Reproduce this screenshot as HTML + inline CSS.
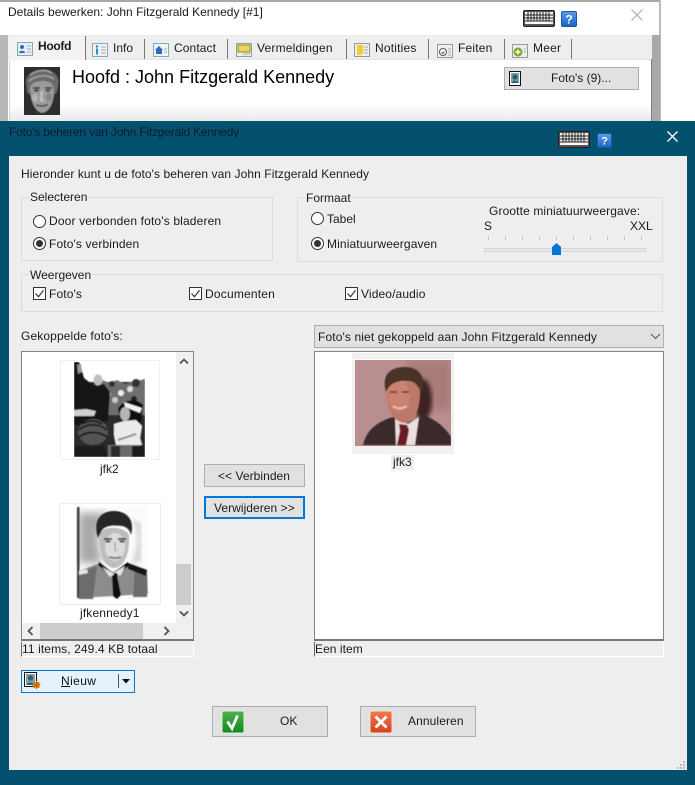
<!DOCTYPE html>
<html><head><meta charset="utf-8"><style>
html,body{margin:0;padding:0}
body{width:695px;height:785px;position:relative;overflow:hidden;background:#fff;font:12px "Liberation Sans",sans-serif;color:#1a1a1a}
.a{position:absolute}
.t{position:absolute;white-space:nowrap;line-height:14px;height:14px}
.b{position:absolute;box-sizing:border-box;background:#e1e1e1;border:1px solid #adadad}
.g{position:absolute;box-sizing:border-box;border:1px solid #dcdcdc}
.r{position:absolute;box-sizing:border-box;width:13px;height:13px;border:1px solid #333;border-radius:50%;background:#fff}
.r.on:after{content:"";position:absolute;left:2px;top:2px;width:7px;height:7px;border-radius:50%;background:#333}
.c{position:absolute;width:13px;height:13px}
.sep{position:absolute;top:39px;width:1px;height:20px;background:#777}
svg{position:absolute;display:block}
.lab{position:absolute;background:#eee;padding:0 1px;line-height:14px;height:14px;white-space:nowrap}
</style></head><body>

<svg width="0" height="0" style="position:absolute"><defs>
<filter id="b05"><feGaussianBlur stdDeviation="0.5"/></filter>
<filter id="b1"><feGaussianBlur stdDeviation="0.9"/></filter>
<filter id="b2"><feGaussianBlur stdDeviation="2"/></filter>
<filter id="b4"><feGaussianBlur stdDeviation="4"/></filter>
<linearGradient id="hg" x1="0" y1="0" x2="0" y2="1"><stop offset="0" stop-color="#5b9de8"/><stop offset="1" stop-color="#1b62c4"/></linearGradient>
<linearGradient id="okg" x1="0" y1="0" x2="0" y2="1"><stop offset="0" stop-color="#54b04c"/><stop offset="1" stop-color="#0f8a1c"/></linearGradient>
<linearGradient id="xg" x1="0" y1="0" x2="0" y2="1"><stop offset="0" stop-color="#ef7a4a"/><stop offset="1" stop-color="#d2401f"/></linearGradient>
<symbol id="kb" viewBox="0 0 32 17"><rect x=".5" y=".5" width="31" height="16" rx="1.5" fill="#555" stroke="#222"/><rect x="2" y="2" width="28" height="12" fill="#f4f4f4"/><path d="M2 5h28M2 8h28M2 11h28M5 2v9M8 2v9M11 2v9M14 2v9M17 2v9M20 2v9M23 2v9M26 2v9" stroke="#222" stroke-width="1"/><rect x="8" y="11.5" width="15" height="2.5" fill="#fff"/></symbol>
<symbol id="hp" viewBox="0 0 16 16"><rect x=".5" y=".5" width="15" height="15" rx="1.5" fill="url(#hg)" stroke="#1b55a8"/><text x="8" y="12.5" font-family="Liberation Sans" font-weight="700" font-size="12" text-anchor="middle" fill="#fff">?</text></symbol>
<symbol id="cb" viewBox="0 0 13 13"><rect x=".5" y=".5" width="12" height="12" fill="#fff" stroke="#333"/><path d="M2.5 6.5l3 3.2 5-6.5" fill="none" stroke="#333" stroke-width="1.2"/></symbol>
</defs></svg>

<!-- back window -->
<div class="a" style="left:0;top:0;width:660px;height:2px;background:#a9a9a3"></div>
<div class="a" style="left:0;top:2px;width:659px;height:34px;background:#fff"></div>
<div class="a" style="left:659px;top:0;width:2px;height:121px;background:#bcbcbc"></div>
<div class="a" style="left:0;top:35px;width:8px;height:86px;background:#b7b7b7"></div>
<div class="a" style="left:652px;top:35px;width:8px;height:86px;background:#a8a8a8"></div>
<div class="a" style="left:8px;top:35px;width:644px;height:24px;background:#eeeeee"></div>
<div class="a" style="left:9px;top:59px;width:642px;height:62px;background:linear-gradient(#fff 0,#fff 44px,#e8e8e8 62px);border-top:1px solid #e6e6e6;box-sizing:border-box"></div>
<div class="a" style="left:9px;top:59px;width:1px;height:62px;background:#d8d8d8"></div>
<div class="a" style="left:651px;top:59px;width:1px;height:62px;background:#808080"></div>

<div class="t" style="left:8px;top:5px">Details bewerken: John Fitzgerald Kennedy [#1]</div>
<svg style="left:523px;top:10px" width="32" height="17"><use href="#kb"/></svg>
<svg style="left:561px;top:11px" width="16" height="16"><use href="#hp"/></svg>
<svg style="left:631px;top:9px" width="12" height="12"><path d="M.5 .5l11 11M11.5 .5l-11 11" stroke="#a8a8a8" stroke-width="1.1"/></svg>

<!-- tabs -->
<div class="a" style="left:9px;top:37px;width:76px;height:23px;background:#f3f3f3"></div>
<div class="sep" style="left:85px;top:36px;height:24px"></div><div class="sep" style="left:144px"></div><div class="sep" style="left:227px"></div><div class="sep" style="left:346px"></div><div class="sep" style="left:428px"></div><div class="sep" style="left:504px"></div><div class="sep" style="left:571px"></div>
<svg style="left:17px;top:42px" width="16" height="14"><rect x=".5" y=".5" width="15" height="13" fill="#e8eef8" stroke="#8aa"/><circle cx="5" cy="5" r="2" fill="#2a6cc0"/><path d="M2 11c0-3 6-3 6 0z" fill="#2a6cc0"/><path d="M10 4h4M10 7h4M10 10h4" stroke="#aab"/></svg>
<div class="t" style="left:38px;top:39px;font-weight:700;letter-spacing:-.3px">Hoofd</div>
<svg style="left:92px;top:43px" width="16" height="14"><rect x=".5" y=".5" width="15" height="13" fill="#eef3fa" stroke="#8aa"/><circle cx="5" cy="3.5" r="1.2" fill="#2a8cc0"/><path d="M5 5.5v6" stroke="#2a8cc0" stroke-width="2"/><path d="M9 4h5M9 7h5M9 10h5" stroke="#aab"/></svg>
<div class="t" style="left:113px;top:41px">Info</div>
<svg style="left:153px;top:43px" width="16" height="14"><rect x=".5" y=".5" width="15" height="13" fill="#eef3fa" stroke="#8aa"/><path d="M2 7l4-4 4 4H9v4H3V7z" fill="#2a6cc0"/><path d="M11 6h3M11 9h3" stroke="#aab"/></svg>
<div class="t" style="left:174px;top:41px;letter-spacing:.1px">Contact</div>
<svg style="left:236px;top:43px" width="16" height="14"><rect x=".5" y=".5" width="15" height="13" fill="#eee" stroke="#8a8"/><rect x="2" y="2" width="12" height="7" fill="#e8d860" stroke="#a08020"/><path d="M7 11h7" stroke="#aaa"/></svg>
<div class="t" style="left:257px;top:41px;letter-spacing:.2px">Vermeldingen</div>
<svg style="left:354px;top:43px" width="16" height="14"><rect x=".5" y=".5" width="15" height="13" fill="#eee" stroke="#999"/><path d="M3 2h6v8l-2 2H3z" fill="#f0d030"/><path d="M10 4h4M10 7h4M10 10h4" stroke="#aaa"/></svg>
<div class="t" style="left:375px;top:41px;letter-spacing:.2px">Notities</div>
<svg style="left:437px;top:44px" width="16" height="14"><rect x=".5" y=".5" width="15" height="13" fill="#eee" stroke="#999"/><circle cx="6" cy="8" r="3.5" fill="#fff" stroke="#555"/><path d="M4.5 8l1.5 1.5L7.5 7.5" stroke="#555" fill="none"/><path d="M11 5h3M11 8h3M11 11h3" stroke="#aaa"/></svg>
<div class="t" style="left:458px;top:41px;letter-spacing:.2px">Feiten</div>
<svg style="left:512px;top:44px" width="16" height="14"><rect x=".5" y=".5" width="15" height="13" fill="#eee" stroke="#999"/><circle cx="6" cy="8" r="4.5" fill="#7aaa28"/><path d="M3.5 8h5M6 5.5v5" stroke="#fff" stroke-width="1.4"/><path d="M12 5h2M12 8h2" stroke="#aaa"/></svg>
<div class="t" style="left:533px;top:41px;letter-spacing:.2px">Meer</div>

<!-- head -->
<svg style="left:24px;top:67px" width="36" height="48" viewBox="0 0 36 48"><rect width="36" height="48" fill="#2e2e2e"/><g filter="url(#b05)">
<path d="M2 14C3 2 26-2 33 9c3 6 1 12-1 18l-2 0C29 18 27 14 21 14c-6 1-12 1-14 5l-1 8-3-1z" fill="#6a6a6a"/>
<path d="M6 8c6-5 16-6 22-2M5 14c7-6 18-7 25-2" stroke="#a5a5a5" stroke-width="1.500" fill="none"/>
<path d="M6 22C6 16 12 14 20 14c7 0 10 4 10 11 0 10-4 20-12 21C11 45 6 34 6 22z" fill="#9c9c9c"/>
<path d="M9 21h7M21 21h7" stroke="#3a3a3a" stroke-width="1.800"/><ellipse cx="12.500" cy="23.500" rx="2.500" ry="1" fill="#2a2a2a"/><ellipse cx="24" cy="23.500" rx="2.500" ry="1" fill="#2a2a2a"/>
<path d="M18 24l-1 9 3 1" stroke="#c9c9c9" stroke-width="2" fill="none"/><path d="M12 38c4 1.500 8 1.500 12-.5" stroke="#3a3a3a" stroke-width="1.300" fill="none"/>
<ellipse cx="11" cy="31" rx="3" ry="4" fill="#b4b4b4"/><ellipse cx="25" cy="30" rx="3" ry="4" fill="#858585"/></g></svg>
<div class="t" style="left:72px;top:67px;font-size:18px;line-height:21px;height:21px;color:#000">Hoofd : John Fitzgerald Kennedy</div>
<div class="b" style="left:504px;top:67px;width:135px;height:23px"></div>
<svg style="left:509px;top:71px" width="12" height="15"><rect x=".5" y=".5" width="11" height="14" fill="#fff" stroke="#111"/><rect x="2" y="2" width="8" height="10" fill="#7f9fa8"/><circle cx="6" cy="6" r="2.6" fill="#2c5c70"/><path d="M3 12c0-3 6-3 6 0z" fill="#2c5c70"/></svg>
<div class="t" style="left:551px;top:71px">Foto's (9)...</div>

<!-- dialog -->
<div class="a" style="left:0;top:121px;width:695px;height:664px;background:#04506f"></div>
<div class="a" style="left:9px;top:156px;width:678px;height:614px;background:#eeeeee"></div>
<div class="t" style="left:9px;top:125px;color:#0c1c2c;letter-spacing:-.2px">Foto's beheren van John Fitzgerald Kennedy</div>
<svg style="left:558px;top:131px" width="32" height="17"><use href="#kb"/></svg>
<svg style="left:597px;top:133px" width="15" height="15"><use href="#hp"/></svg>
<svg style="left:667px;top:131px" width="11" height="11"><path d="M.5 .5l10 10M10.5 .5l-10 10" stroke="#fff" stroke-width="1.3"/></svg>

<div class="t" style="left:21px;top:167px;letter-spacing:.08px">Hieronder kunt u de foto's beheren van John Fitzgerald Kennedy</div>

<!-- Selecteren -->
<div class="g" style="left:21px;top:197px;width:252px;height:64px"></div>
<div class="lab" style="left:29px;top:190px">Selecteren</div>
<div class="r" style="left:33px;top:215px"></div><div class="t" style="left:49px;top:214px;letter-spacing:.15px">Door verbonden foto's bladeren</div>
<div class="r on" style="left:33px;top:237px"></div><div class="t" style="left:49px;top:237px;letter-spacing:.12px">Foto's verbinden</div>

<!-- Formaat -->
<div class="g" style="left:297px;top:197px;width:366px;height:65px"></div>
<div class="lab" style="left:305px;top:191px">Formaat</div>
<div class="r" style="left:311px;top:212px"></div><div class="t" style="left:327px;top:212px">Tabel</div>
<div class="r on" style="left:311px;top:237px"></div><div class="t" style="left:327px;top:237px;letter-spacing:.12px">Miniatuurweergaven</div>
<div class="t" style="left:489px;top:204px;letter-spacing:.12px">Grootte miniatuurweergave:</div>
<div class="t" style="left:484px;top:219px">S</div>
<div class="t" style="left:630px;top:219px">XXL</div>
<svg style="left:484px;top:234px" width="164" height="24">
<path d="M4.500 2v4M21.500 2v4M38.500 2v4M55.500 2v4M72.500 2v4M89.500 2v4M106.500 2v4M123.500 2v4M140.500 2v4M157.500 2v4" stroke="#c4c4c4"/>
<rect x=".5" y="14.500" width="161" height="3" fill="#e6e6e6" stroke="#d6d6d6"/>
<path d="M68 13l4.500-4 4.500 4v8h-9z" fill="#0078d7"/></svg>

<!-- Weergeven -->
<div class="g" style="left:21px;top:274px;width:642px;height:38px"></div>
<div class="lab" style="left:29px;top:268px">Weergeven</div>
<svg class="c" style="left:33px;top:287px"><use href="#cb"/></svg><div class="t" style="left:49px;top:287px;letter-spacing:.12px">Foto's</div>
<svg class="c" style="left:189px;top:287px"><use href="#cb"/></svg><div class="t" style="left:205px;top:287px;letter-spacing:.2px">Documenten</div>
<svg class="c" style="left:345px;top:287px"><use href="#cb"/></svg><div class="t" style="left:361px;top:287px;letter-spacing:.12px">Video/audio</div>

<div class="t" style="left:21px;top:329px;letter-spacing:.12px">Gekoppelde foto's:</div>
<div class="b" style="left:314px;top:325px;width:350px;height:23px"></div>
<div class="t" style="left:318px;top:330px;letter-spacing:.12px">Foto's niet gekoppeld aan John Fitzgerald Kennedy</div>
<svg style="left:650px;top:333px" width="11" height="7"><path d="M1 1l4.500 4.500L10 1" fill="none" stroke="#555" stroke-width="1.1"/></svg>

<!-- left list -->
<div class="a" style="left:21px;top:351px;width:173px;height:290px;box-sizing:border-box;background:#fff;border:1px solid #848484;border-bottom:2px solid #777"></div>
<div class="a" style="left:176px;top:352px;width:17px;height:271px;background:#f0f0f0"></div>
<div class="a" style="left:176px;top:564px;width:15px;height:41px;background:#cdcdcd"></div>
<svg style="left:179px;top:358px" width="10" height="7"><path d="M1 5.500l4-4 4 4" fill="none" stroke="#505050" stroke-width="1.8"/></svg>
<svg style="left:179px;top:610px" width="10" height="7"><path d="M1 1.500l4 4 4-4" fill="none" stroke="#505050" stroke-width="1.8"/></svg>
<div class="a" style="left:22px;top:623px;width:171px;height:16px;background:#f0f0f0"></div>
<div class="a" style="left:40px;top:623px;width:103px;height:16px;background:#cdcdcd"></div>
<svg style="left:27px;top:626px" width="7" height="10"><path d="M5.500 1l-4 4 4 4" fill="none" stroke="#505050" stroke-width="1.8"/></svg>
<svg style="left:163px;top:626px" width="7" height="10"><path d="M1.500 1l4 4-4 4" fill="none" stroke="#505050" stroke-width="1.8"/></svg>

<div class="a" style="left:60px;top:360px;width:100px;height:100px;box-sizing:border-box;border:1px solid #f0f0f0"></div>
<svg style="left:74px;top:362px" width="71" height="95" viewBox="0 0 71 95"><rect width="71" height="95" fill="#fff"/><g filter="url(#b05)">
<rect y="20" width="71" height="75" fill="#2a2a2a"/>
<path d="M22 22l6-4 8 3 7-3 8 4 8-2 12-3v36H22z" fill="#6e6e6e"/>
<circle cx="38" cy="22" r="3" fill="#333"/><circle cx="62" cy="21" r="4" fill="#333"/><circle cx="47" cy="31" r="3" fill="#eee"/><circle cx="56" cy="27" r="3" fill="#ddd"/><circle cx="41" cy="38" r="3" fill="#c8c8c8"/><circle cx="60" cy="37" r="3" fill="#222"/><circle cx="34" cy="32" r="3" fill="#aaa"/>
<path d="M0 0l5 0 3 9 2 7 10 8 10-2 6 8-2 28-18 10-16-6z" fill="#161616"/>
<path d="M3 3l1 9 4-2-1-8z" fill="#999"/>
<ellipse cx="24" cy="18" rx="4.500" ry="5.500" fill="#bdbdbd"/>
<path d="M0 48l12-1 10 2-2 5H0z" fill="#cfcfcf"/>
<ellipse cx="19" cy="70" rx="15" ry="13" fill="#555"/><path d="M5 68c8-7 20-7 28 0M5 75c8-6 20-6 28 0M8 62c6-4 14-4 20 0" stroke="#181818" stroke-width="1.800" fill="none"/>
<path d="M0 84h30l4 11H0z" fill="#1a1a1a"/>
<path d="M44 47c4-9 18-12 25-4l-2 18-20 0z" fill="#0e0e0e"/><path d="M50 40l18 6-2 5-15-6z" fill="#f2f2f2"/><ellipse cx="51" cy="52" rx="5" ry="7" fill="#b5b5b5"/>
<path d="M40 62l10-3 12-1 6 6-2 12 2 7-26 0-2-10z" fill="#ebebeb"/><path d="M44 78l18-6" stroke="#8d8d8d" stroke-width="2"/>
<path d="M34 83l32 0 4 12H34z" fill="#6a6a6a"/><rect x="37" y="84" width="9" height="11" fill="#2c2c2c"/><rect x="58" y="84" width="13" height="11" fill="#1c1c1c"/></g></svg>
<div class="t" style="left:100px;top:462px">jfk2</div>

<div class="a" style="left:59px;top:503px;width:102px;height:102px;box-sizing:border-box;border:1px solid #ececec"></div>
<svg style="left:75px;top:505px" width="74" height="98" viewBox="0 0 74 98"><rect width="74" height="98" fill="#fff"/>
<rect x="3" y="2" width="70" height="92" fill="#fbfbfb"/>
<path d="M4 8h30c-12 8-14 30-6 50H4z" fill="#a8a8a8" filter="url(#b4)"/>
<path d="M56 14c8 8 8 30 0 44l10-2V18z" fill="#d4d4d4" filter="url(#b2)"/>
<g filter="url(#b05)">
<rect x="2" y="2" width="2.500" height="91" fill="#3c3c3c"/>
<path d="M4 66l18-7 16 8 16-9 18 7 1 24-69 4z" fill="#8c8c8c"/>
<path d="M4 94l0-26 18-7-4 33zM72 92l0-22-12-6-2 28z" fill="#6c6c6c"/>
<path d="M24 57l14 11 15-11 1 4-14 9h-6l-11-10z" fill="#0f0f0f"/><path d="M37 70l5 0 4 20-4 4-4-3z" fill="#0f0f0f"/>
<path d="M53 58l19 7-1 6-18-7z" fill="#141414"/><path d="M4 66l8-2 1 4-9 2z" fill="#e8e8e8"/>
<path d="M27 62l11 6 12-7-4 9-4 1-4-1-3 2z" fill="#e4e4e4"/><path d="M38 68l4 0 1 3-3 1z" fill="#0f0f0f"/>
<path d="M25 28c-2 18 3 34 14 35 11-1 16-16 15-33-3-8-24-10-29-2z" fill="#bdbdbd"/>
<ellipse cx="40" cy="42" rx="10" ry="14" fill="#dcdcdc"/>
<path d="M23 33C17 14 27 6 39 6c13 0 21 9 17 24-1-5-4-8-9-9-8-1-16-1-20 4z" fill="#262626"/>
<path d="M29 34h8M43 34h8" stroke="#333" stroke-width="1.800"/><ellipse cx="33" cy="36.500" rx="2.500" ry="1" fill="#222"/><ellipse cx="47" cy="36.500" rx="2.500" ry="1" fill="#222"/>
<path d="M40 37v8l2 1" stroke="#8d8d8d" fill="none"/><path d="M34 52c4 1.500 8 1.500 12 0" stroke="#444" stroke-width="1.300" fill="none"/></g></svg>
<div class="t" style="left:80px;top:606px;letter-spacing:.15px">jfkennedy1</div>

<div class="a" style="left:21px;top:642px;width:173px;height:15px;box-sizing:border-box;border-left:1px solid #666;border-right:1px solid #fff;border-bottom:1px solid #fff"></div>
<div class="t" style="left:22px;top:642px;letter-spacing:.1px">11 items, 249.4 KB totaal</div>

<!-- Nieuw -->
<div class="b" style="left:21px;top:670px;width:114px;height:23px;background:#e5f1fb;border-color:#0078d7"></div>
<svg style="left:24px;top:672px" width="17" height="18"><rect x=".5" y=".5" width="12" height="14" fill="#fff" stroke="#111"/><rect x="2" y="2" width="9" height="11" fill="#7f9fa8"/><circle cx="6.500" cy="6" r="2.600" fill="#2c5c70"/><path d="M3 13c0-3 7-3 7 0z" fill="#2c5c70"/><circle cx="12.500" cy="13" r="3.500" fill="#e8a020"/><path d="M8.500 13h8M12.500 9v8M9.700 10.200l5.600 5.600M15.300 10.200l-5.600 5.600" stroke="#c86010" stroke-width=".9"/></svg>
<div class="t" style="left:61px;top:674px;letter-spacing:.4px;color:#111"><u>N</u>ieuw</div>
<div class="a" style="left:118px;top:674px;width:1px;height:14px;background:#555"></div>
<svg style="left:122px;top:679px" width="9" height="5"><path d="M0 0h8L4 4.500z" fill="#111"/></svg>

<!-- mid buttons -->
<div class="b" style="left:204px;top:464px;width:101px;height:23px"></div>
<div class="t" style="left:218px;top:469px;letter-spacing:.05px">&lt;&lt; Verbinden</div>
<div class="b" style="left:204px;top:496px;width:101px;height:23px;border:2px solid #0078d7"></div>
<div class="t" style="left:214px;top:501px;letter-spacing:.05px">Verwijderen &gt;&gt;</div>

<!-- right list -->
<div class="a" style="left:314px;top:351px;width:350px;height:290px;box-sizing:border-box;background:#fff;border:1px solid #848484;border-bottom:2px solid #777"></div>
<div class="a" style="left:352px;top:353px;width:102px;height:101px;box-sizing:border-box;border:3px solid #f1f1f1;border-bottom-width:8px;border-top-width:6px"></div>
<svg style="left:355px;top:360px" width="96" height="86" viewBox="0 0 96 86"><rect width="96" height="86" fill="#b48888"/>
<rect width="96" height="86" fill="#b98e8e"/><rect x="52" width="44" height="50" fill="#a97c7a" filter="url(#b4)"/>
<ellipse cx="68" cy="40" rx="9" ry="21" fill="#3e2422" filter="url(#b2)"/>
<g filter="url(#b05)">
<path d="M8 85c3-12 10-22 30-28l14 6 16-8c12 4 22 12 28 22v8z" fill="#3b2c2c"/>
<path d="M40 58l13 6 11-7-4 28H41z" fill="#e9dfdc"/><path d="M44 64l8 1 2 5-3 15h-9l3-14z" fill="#6a1c24"/>
<path d="M32 28c-1 18 4 34 18 35 10-1 16-16 15-33-3-10-28-11-33-2z" fill="#bc7868"/>
<ellipse cx="44" cy="36" rx="11" ry="16" fill="#cb8272"/>
<path d="M31 32C26 14 36 7 50 7c13 0 22 9 17 26-2-6-5-11-13-12-9-1-19 1-23 11z" fill="#4a3026"/>
<path d="M35 32h7M47 32h7" stroke="#5f352a" stroke-width="1.500"/>
<path d="M38 46c4 3 10 3 14 0" stroke="#e8cfc5" stroke-width="1.500" fill="none"/></g></svg>
<div class="a" style="left:391px;top:455px;width:23px;height:15px;background:#eee"></div>
<div class="t" style="left:393px;top:455px">jfk3</div>

<div class="a" style="left:314px;top:642px;width:350px;height:15px;box-sizing:border-box;border-left:1px solid #666;border-right:1px solid #fff;border-bottom:1px solid #fff"></div>
<div class="t" style="left:315px;top:642px;letter-spacing:.06px">Een item</div>

<!-- footer -->
<div class="b" style="left:212px;top:706px;width:116px;height:31px"></div>
<svg style="left:221px;top:710px" width="24" height="24"><rect x="1" y="1" width="22" height="22" rx="2" fill="url(#okg)" stroke="#dff0df"/><path d="M6.500 11.500l4.500 7 5.500-13" fill="none" stroke="#fff" stroke-width="2.800"/></svg>
<div class="t" style="left:280px;top:714px">OK</div>
<div class="b" style="left:360px;top:706px;width:116px;height:31px"></div>
<svg style="left:369px;top:710px" width="24" height="24"><rect x="1" y="1" width="22" height="22" rx="2" fill="url(#xg)" stroke="#f5e0d8"/><path d="M6.500 6.500l11 11M17.500 6.500l-11 11" stroke="#fff" stroke-width="2.800"/></svg>
<div class="t" style="left:408px;top:714px;letter-spacing:.1px">Annuleren</div>
<svg style="left:676px;top:760px" width="10" height="10"><path d="M7 1h2v2H7zM4 4h2v2H4zM7 4h2v2H7zM1 7h2v2H1zM4 7h2v2H4zM7 7h2v2H7z" fill="#bdbdbd"/></svg>
</body></html>
